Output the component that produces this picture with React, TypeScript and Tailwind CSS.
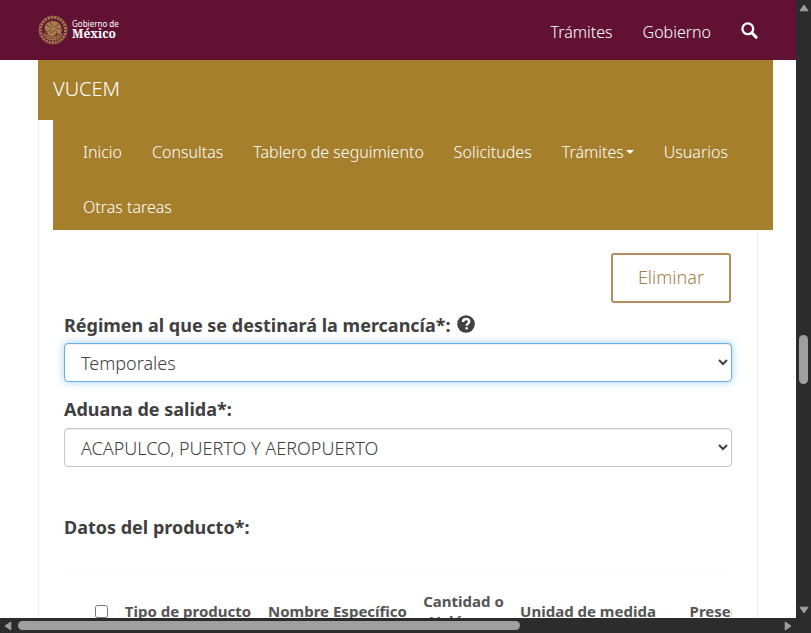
import React from "react";

const menuItems = [
  "Inicio",
  "Consultas",
  "Tablero de seguimiento",
  "Solicitudes",
  "Trámites",
  "Usuarios",
  "Otras tareas",
];

function Emblem() {
  return (
    <svg viewBox="0 0 58 58" className="size-[30px] shrink-0" fill="none" aria-hidden="true">
      <circle cx="29" cy="29" r="27" stroke="#a57f4c" strokeWidth="1.5" />
      <circle cx="29" cy="29" r="24" stroke="#a57f4c" strokeWidth="5" strokeDasharray="4 2" />
      <circle cx="29" cy="29" r="20" fill="#6b2634" />
      <path
        d="M13 25c1-10 9-14 18-13 8 1 13 6 14 13 1 5 0 9-3 13l-6-3-6 7-8-3-6-6z"
        fill="#a57f4c"
      />
      <path
        d="M15 18l11 8M22 13l8 10M40 18l-8 5M44 27l-10-1M17 32l9-3M24 35l7-4M38 35l-5-6"
        stroke="#6b2634"
        strokeWidth="1.4"
      />
      <path
        d="M12 36c4 9 10 12 17 12s13-3 17-12M18 38c3 4 7 6 11 6s8-2 11-6"
        stroke="#b08a52"
        strokeWidth="3"
        strokeDasharray="4 1"
      />
    </svg>
  );
}

function SearchIcon() {
  return (
    <svg viewBox="0 0 17 17" className="size-[17px]" fill="none" stroke="#fff" aria-hidden="true">
      <circle cx="6.8" cy="6.8" r="5.4" strokeWidth="2.3" />
      <path d="M10.8 10.8l4.3 4.3" strokeWidth="3" strokeLinecap="round" />
    </svg>
  );
}

function HelpIcon() {
  return (
    <svg viewBox="0 0 18 18" className="mb-[2px] size-[18px]" aria-label="Ayuda">
      <circle cx="9" cy="9" r="8.8" fill="#404041" />
      <path
        d="M6 7c0-2 1.3-3 3.1-3s3.1 1 3.1 2.6c0 2-2.6 2-2.6 4.1"
        stroke="#fff"
        strokeWidth="2.4"
        fill="none"
      />
      <path d="M8.4 12.2h2.4v2.2H8.4z" fill="#fff" />
    </svg>
  );
}

function Arrow({ turn }: { turn: string }) {
  return (
    <svg viewBox="0 0 10 8" className={`h-2 w-[10px] shrink-0 ${turn}`} aria-hidden="true">
      <path d="M5 1L9 6.8H1z" fill="#9f9f9f" stroke="#9f9f9f" strokeWidth="1" strokeLinejoin="round" />
    </svg>
  );
}

function Header() {
  return (
    <header className="flex h-[60px] shrink-0 items-center justify-between bg-[#611232] px-[38px] text-white">
      <a href="#" className="flex items-center gap-1">
        <Emblem />
        <span className="flex flex-col">
          <span className="text-[8px] leading-[8px]">Gobierno de</span>
          <span className="font-['Noto_Serif','Liberation_Serif',serif] text-[12px] leading-[12px] font-bold">
            México
          </span>
        </span>
      </a>
      <nav className="flex items-center gap-[30px] pt-1 text-[16px] leading-6 font-light">
        <a href="#">Trámites</a>
        <a href="#">Gobierno</a>
        <button type="button" aria-label="Buscar" className="pb-1">
          <SearchIcon />
        </button>
      </nav>
    </header>
  );
}

function Menu() {
  return (
    <nav className="-mr-4 -ml-px text-white">
      <div className="h-[60px] bg-[#a57f2c] px-[15px] pt-[14px] text-[20px] leading-[30px] font-light">
        <a href="#">VUCEM</a>
      </div>
      <ul className="ml-[15px] flex flex-wrap bg-[#a57f2c] px-[15px] text-[16px] leading-6 font-light">
        {menuItems.map((item) => (
          <li key={item} className="px-[15px] pt-5 pb-[11px]">
            <a href="#" className="flex items-center">
              {item}
              {item === "Trámites" && (
                <span className="ml-[2px] border-x-4 border-t-4 border-x-transparent border-t-white" />
              )}
            </a>
          </li>
        ))}
      </ul>
    </nav>
  );
}

const selectClass =
  "block h-[39px] w-full rounded border bg-white px-3 text-[18px] font-light text-[#404041] outline-none";

function Form() {
  return (
    <form className="px-[25px] pt-[23px]">
      <div className="flex justify-end pr-px">
        <button
          type="button"
          className="h-[50px] rounded-[3px] border-2 border-[#b38e5d] bg-white px-[25px] pb-[2px] text-[18px] leading-6 font-light text-[#a57f4c]"
        >
          Eliminar
        </button>
      </div>
      <div className="pt-2">
        <label htmlFor="regimen" className="flex h-8 items-center gap-[6px] pb-1 text-[18px] font-bold">
          Régimen al que se destinará la mercancía*:
          <HelpIcon />
        </label>
        <select
          id="regimen"
          className={`${selectClass} border-[#66afe9] shadow-[inset_0_1px_1px_rgba(0,0,0,0.075),0_0_8px_rgba(102,175,233,0.6)]`}
        >
          <option>Temporales</option>
        </select>
      </div>
      <div className="pt-3">
        <label htmlFor="aduana" className="flex h-[34px] items-start pt-[2px] text-[18px] font-bold">
          Aduana de salida*:
        </label>
        <select id="aduana" className={`${selectClass} border-[#c8c8c8] shadow-[inset_0_1px_1px_rgba(0,0,0,0.075)]`}>
          <option>ACAPULCO, PUERTO Y AEROPUERTO</option>
        </select>
      </div>
      <h2 className="pt-[46px] text-[18px] leading-7 font-bold">Datos del producto*:</h2>
      <div className="mt-[34px] overflow-hidden border-t border-[#fbfbfb]">
        <table className="mt-[7px] w-[900px] table-fixed text-[15px] leading-5 text-[#545454]">
          <colgroup>
            <col className="w-[52px]" />
            <col className="w-[144px]" />
            <col className="w-[155px]" />
            <col className="w-[97px]" />
            <col className="w-[152px]" />
            <col className="w-[149px]" />
            <col />
          </colgroup>
          <thead>
            <tr>
              <th className="p-2 pl-[31px] text-left">
                <input type="checkbox" aria-label="Seleccionar todos" className="block size-[13px]" />
              </th>
              <th className="py-2">Tipo de producto</th>
              <th className="py-2">Nombre Específico</th>
              <th className="px-2 py-2">Cantidad o Volúmen</th>
              <th className="py-2">Unidad de medida</th>
              <th className="py-2">Presentación</th>
              <th />
            </tr>
          </thead>
        </table>
      </div>
    </form>
  );
}

export default function App() {
  return (
    <div className="grid h-screen grid-cols-[minmax(0,1fr)_15px] grid-rows-[minmax(0,1fr)_15px] overflow-hidden bg-[#2c2c2c] font-['Noto_Sans',sans-serif] text-[#404041]">
      <div className="flex min-h-0 flex-col overflow-hidden bg-white">
        <Header />
        <main className="mx-[38px] min-h-0 flex-1 border-x border-[#eeeeee]">
          <Menu />
          <Form />
        </main>
      </div>
      <div className="flex flex-col items-center py-1">
        <Arrow turn="" />
        <div className="flex w-[9px] flex-1 flex-col pb-[222px]">
          <div className="mt-auto h-[49px] rounded-full bg-[#9f9f9f]" />
        </div>
        <Arrow turn="rotate-180" />
      </div>
      <div className="flex items-center gap-[5px] px-[3px]">
        <Arrow turn="-rotate-90" />
        <div className="flex-1">
          <div className="h-[9px] w-[66%] rounded-full bg-[#9f9f9f]" />
        </div>
        <Arrow turn="rotate-90" />
      </div>
      <div />
    </div>
  );
}
